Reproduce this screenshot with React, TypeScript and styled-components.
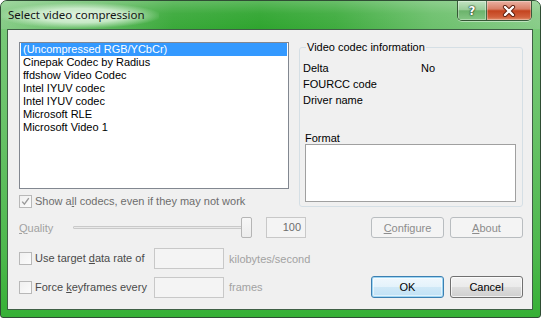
import React from 'react';
import styled, { createGlobalStyle, css } from 'styled-components';

const Global = createGlobalStyle`
  html, body { margin: 0; padding: 0; background: #ffffff; }
  #root { width: 541px; height: 318px; }
  * { box-sizing: border-box; }
`;

const Window = styled.div`
  width: 541px;
  height: 318px;
  border: 1px solid #2f4d34;
  border-radius: 7px 7px 3px 3px;
  background: linear-gradient(180deg, #7ccb7c 0%, #68c268 40%, #4db84d 80%, #36b036 100%);
  display: flex;
  flex-direction: column;
  overflow: hidden;
  font-family: "Liberation Sans", Arial, sans-serif;
  font-size: 11px;
  color: #000;
`;

const TitleBar = styled.div`
  height: 28px;
  display: flex;
  align-items: flex-start;
  justify-content: space-between;
  background:
    linear-gradient(180deg, rgba(255,255,255,0.22) 0%, rgba(255,255,255,0.05) 45%, rgba(255,255,255,0) 100%),
    linear-gradient(90deg, #86cc86 0%, #62bb62 18%, #3aa93a 32%, #2fa52f 48%, #3fac3f 62%, #6cc06c 80%, #88cc88 100%);
`;

const TitleText = styled.div`
  height: 28px;
  line-height: 28px;
  padding: 0 14px 0 7px;
  font-family: "Noto Sans", "Open Sans", sans-serif;
  font-size: 11.5px;
  color: #141414;
  background: radial-gradient(ellipse 52% 46% at 50% 52%, rgba(232,246,232,0.95) 0%, rgba(215,240,215,0.85) 55%, rgba(190,230,190,0) 100%);
`;

const CaptionButtons = styled.div`
  display: flex;
  margin-right: 8px;
  height: 20px;
  border: 1px solid rgba(30, 50, 30, 0.75);
  border-top: none;
  border-radius: 0 0 5px 5px;
  overflow: hidden;
  box-shadow: 0 1px 0 rgba(255,255,255,0.45);
`;

const CaptionButton = styled.div<{ $kind: 'help' | 'close' }>`
  height: 100%;
  display: flex;
  align-items: center;
  justify-content: center;
  ${(p) =>
    p.$kind === 'help'
      ? css`
          width: 29px;
          border-right: 1px solid rgba(30, 50, 30, 0.6);
          background: linear-gradient(180deg, #c2e3c2 0%, #9acd9a 45%, #6cb36c 52%, #84c684 100%);
          box-shadow: inset 0 0 0 1px rgba(255,255,255,0.35);
        `
      : css`
          width: 44px;
          background: linear-gradient(180deg, #eab1a2 0%, #d98068 42%, #c4441f 52%, #d2613d 85%, #e0926f 100%);
          box-shadow: inset 0 0 0 1px rgba(255,255,255,0.3);
        `}
`;

const HelpGlyph = styled.span`
  font-family: "DejaVu Sans", sans-serif;
  font-weight: bold;
  font-size: 12px;
  color: #ffffff;
  line-height: 1;
  text-shadow: 0 0 1px #1f3a1f, 0 0 1px #1f3a1f, 0 0 2px #1f3a1f;
`;

const ClientFrame = styled.div`
  flex: 1;
  margin: 0 7px 7px 6px;
  border: 1px solid #3f5f45;
  background: #f0f0f0;
  display: flex;
  flex-direction: column;
  padding: 12px 9px 0 11px;
`;

const TopSection = styled.div`
  display: flex;
  gap: 10px;
`;

const LeftColumn = styled.div`
  width: 270px;
  display: flex;
  flex-direction: column;
`;

const ListBox = styled.div`
  height: 147px;
  border: 1px solid #828790;
  background: #ffffff;
  padding: 0 1px;
`;

const ListItem = styled.div<{ $selected?: boolean }>`
  height: 13px;
  line-height: 13px;
  padding-left: 2px;
  white-space: nowrap;
  ${(p) =>
    p.$selected &&
    css`
      background: #3399ff;
      color: #ffffff;
    `}
`;

const CheckRow = styled.label<{ $disabled?: boolean; $width?: number; $top?: number }>`
  display: flex;
  align-items: center;
  gap: 3px;
  height: 13px;
  line-height: 13px;
  white-space: nowrap;
  width: ${(p) => (p.$width ? `${p.$width}px` : 'auto')};
  margin-top: ${(p) => p.$top ?? 0}px;
  color: ${(p) => (p.$disabled ? '#6d6d6d' : '#4a4a4a')};
`;

const CheckBox = styled.span`
  width: 13px;
  height: 13px;
  flex: none;
  border: 1px solid #b8b8b8;
  background: linear-gradient(135deg, #f0f0f0 0%, #fbfbfb 100%);
  display: flex;
  align-items: center;
  justify-content: center;
`;

const GroupBox = styled.fieldset`
  margin: -1px 0 0 0;
  width: 224px;
  height: 166px;
  border: 1px solid #d5dfe5;
  border-radius: 3px;
  padding: 0 0 0 3px;
  min-width: 0;
`;

const Legend = styled.legend`
  margin-left: 3px;
  padding: 0 1px;
  line-height: 13px;
  height: 13px;
`;

const InfoGrid = styled.div`
  margin-top: 6px;
  display: grid;
  grid-template-columns: 118px auto;
  grid-auto-rows: 16px;
  line-height: 16px;
`;

const FormatLabel = styled.div`
  margin-top: 24px;
  padding-left: 2px;
  line-height: 12px;
  height: 12px;
`;

const FormatBox = styled.div`
  margin-left: 2px;
  width: 211px;
  height: 58px;
  border: 1px solid #a0a0a0;
  background: #ffffff;
`;

const Row = styled.div<{ $top: number; $height: number }>`
  display: flex;
  align-items: center;
  margin-top: ${(p) => p.$top}px;
  height: ${(p) => p.$height}px;
  white-space: nowrap;
`;

const FaintLabel = styled.span<{ $width?: number; $gap?: number }>`
  color: #a2a2a2;
  width: ${(p) => (p.$width ? `${p.$width}px` : 'auto')};
  margin-left: ${(p) => p.$gap ?? 0}px;
  flex: none;
`;

const Slider = styled.div`
  width: 179px;
  height: 21px;
  display: flex;
  align-items: center;
  flex: none;
`;

const Track = styled.div`
  flex: 1;
  height: 3px;
  border: 1px solid #c9c9c9;
  border-radius: 1px;
  background: #e9e9e9;
`;

const Thumb = styled.div`
  width: 11px;
  height: 21px;
  margin-left: -7px;
  border: 1px solid #b5b5b5;
  border-radius: 2px;
  background: linear-gradient(180deg, #f7f7f7 0%, #ececec 100%);
`;

const Edit = styled.div<{ $width: number; $height?: number; $gap?: number; $align?: string }>`
  width: ${(p) => p.$width}px;
  height: ${(p) => p.$height ?? 21}px;
  margin-left: ${(p) => p.$gap ?? 0}px;
  flex: none;
  border: 1px solid #c8c8c8;
  background: #f4f4f4;
  color: #6d6d6d;
  text-align: ${(p) => p.$align ?? 'left'};
  padding: 0 4px;
  line-height: 19px;
  font-size: 11px;
`;

const Spacer = styled.div`
  flex: 1;
`;

const Button = styled.div<{ $variant: 'default' | 'normal' | 'disabled'; $height: number; $gap?: number }>`
  width: 73px;
  height: ${(p) => p.$height}px;
  margin-left: ${(p) => p.$gap ?? 0}px;
  flex: none;
  border-radius: 3px;
  display: flex;
  align-items: center;
  justify-content: center;
  ${(p) =>
    p.$variant === 'disabled'
      ? css`
          border: 1px solid #b9bdc0;
          background: #f4f4f4;
          color: #8c8c8c;
        `
      : p.$variant === 'default'
      ? css`
          border: 1px solid #3c7fb1;
          color: #000;
          background: linear-gradient(180deg, #f0f8fd 0%, #e4f2fb 48%, #cfe8f7 52%, #c0e1f5 100%);
          box-shadow: inset 0 0 0 1px #9fd6f3, inset 0 0 0 2px rgba(255,255,255,0.5);
        `
      : css`
          border: 1px solid #707070;
          color: #000;
          background: linear-gradient(180deg, #f2f2f2 0%, #ebebeb 48%, #dddddd 52%, #cfcfcf 100%);
          box-shadow: inset 0 0 0 1px rgba(255,255,255,0.7);
        `}
`;

const CheckMark = () => (
  <svg width="9" height="9" viewBox="0 0 9 9">
    <path d="M1.2 4.6 L3.4 7.2 L7.8 1.2" fill="none" stroke="#9a9a9a" strokeWidth="1.4" />
  </svg>
);

const CloseGlyph = () => (
  <svg width="14" height="12" viewBox="0 0 14 12">
    <path d="M3 2 L11 10 M11 2 L3 10" stroke="#5a1a0a" strokeWidth="4.2" strokeLinecap="round" />
    <path d="M3 2 L11 10 M11 2 L3 10" stroke="#ffffff" strokeWidth="2.4" strokeLinecap="round" />
  </svg>
);

const codecs = [
  '(Uncompressed RGB/YCbCr)',
  'Cinepak Codec by Radius',
  'ffdshow Video Codec',
  'Intel IYUV codec',
  'Intel IYUV codec',
  'Microsoft RLE',
  'Microsoft Video 1',
];

export default function App() {
  return (
    <>
      <Global />
      <Window>
        <TitleBar>
          <TitleText>Select video compression</TitleText>
          <CaptionButtons>
            <CaptionButton $kind="help">
              <HelpGlyph>?</HelpGlyph>
            </CaptionButton>
            <CaptionButton $kind="close">
              <CloseGlyph />
            </CaptionButton>
          </CaptionButtons>
        </TitleBar>
        <ClientFrame>
          <TopSection>
            <LeftColumn>
              <ListBox>
                {codecs.map((c, i) => (
                  <ListItem key={i} $selected={i === 0}>
                    {c}
                  </ListItem>
                ))}
              </ListBox>
              <CheckRow $disabled $top={6}>
                <CheckBox>
                  <CheckMark />
                </CheckBox>
                <span>
                  Show a<u>l</u>l codecs, even if they may not work
                </span>
              </CheckRow>
            </LeftColumn>
            <GroupBox>
              <Legend>Video codec information</Legend>
              <InfoGrid>
                <span>Delta</span>
                <span>No</span>
                <span>FOURCC code</span>
                <span></span>
                <span>Driver name</span>
                <span></span>
              </InfoGrid>
              <FormatLabel>Format</FormatLabel>
              <FormatBox />
            </GroupBox>
          </TopSection>
          <Row $top={9} $height={21}>
            <FaintLabel $width={54}>
              <u>Q</u>uality
            </FaintLabel>
            <Slider>
              <Track />
              <Thumb />
            </Slider>
            <Edit $width={40} $gap={14} $align="right">
              100
            </Edit>
            <Spacer />
            <Button $variant="disabled" $height={21}>
              <span>
                <u>C</u>onfigure
              </span>
            </Button>
            <Button $variant="disabled" $height={21} $gap={6}>
              <span>
                <u>A</u>bout
              </span>
            </Button>
          </Row>
          <Row $top={10} $height={21}>
            <CheckRow $width={135}>
              <CheckBox />
              <span>
                Use target <u>d</u>ata rate of
              </span>
            </CheckRow>
            <Edit $width={70} />
            <FaintLabel $gap={5}>kilobytes/second</FaintLabel>
          </Row>
          <Row $top={7} $height={22}>
            <CheckRow $width={135}>
              <CheckBox />
              <span>
                Force <u>k</u>eyframes every
              </span>
            </CheckRow>
            <Edit $width={70} />
            <FaintLabel $gap={5}>frames</FaintLabel>
            <Spacer />
            <Button $variant="default" $height={22}>
              OK
            </Button>
            <Button $variant="normal" $height={22} $gap={6}>
              Cancel
            </Button>
          </Row>
        </ClientFrame>
      </Window>
    </>
  );
}
